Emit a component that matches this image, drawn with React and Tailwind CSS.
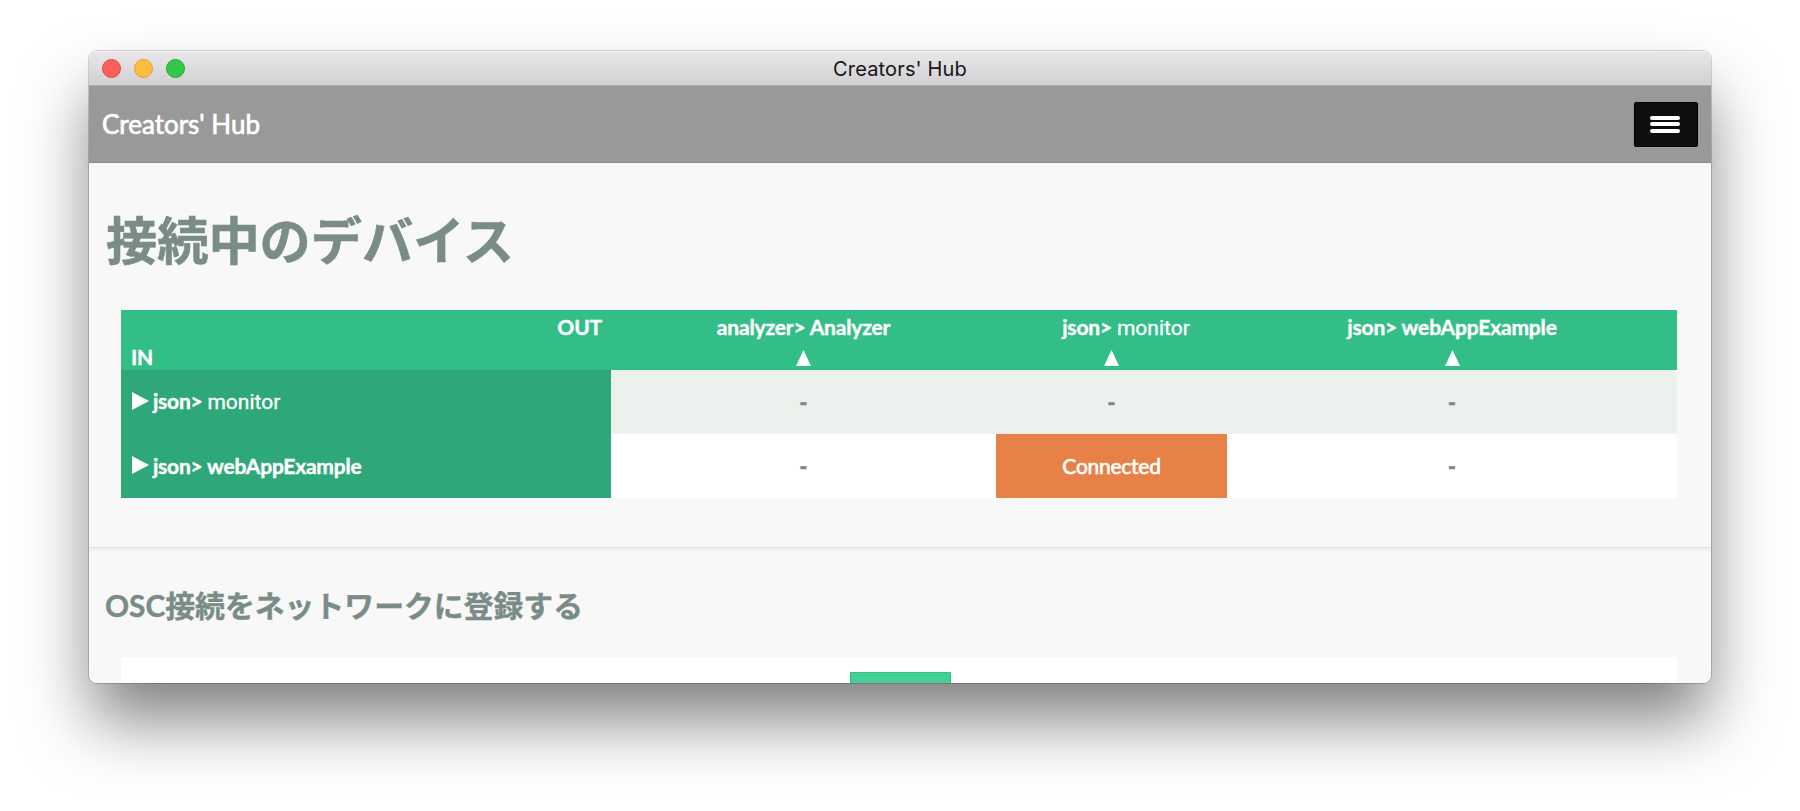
const th = 'h-[60px] p-0 pt-[2px] align-top font-bold leading-[30px] tracking-[-0.17px] [-webkit-text-stroke:0.4px_white]';
const cell = 'h-16 p-0 text-center font-black text-[#7a8c86] [-webkit-text-stroke:0.6px_#7a8c86]';
const side = 'h-16 bg-[#2fa879] p-0 pl-[11px] text-left font-bold tracking-[-0.22px] [-webkit-text-stroke:0.4px_white]';
const monitor = "font-['Roboto',sans-serif] font-normal text-[21px] tracking-[0px] [-webkit-text-stroke:0.3px_white]";

function Up() {
  return (
    <div className="flex h-[24px] items-end justify-center">
      <svg width="15" height="16" viewBox="0 0 16 16" preserveAspectRatio="none"><path d="M8 0L16 16H0Z" fill="#fff" /></svg>
    </div>
  );
}

function Play() {
  return (
    <svg width="17" height="18" viewBox="0 0 17 18" className="mr-[4px] -mt-[2px]"><path d="M0 0L17 9L0 18Z" fill="#fff" /></svg>
  );
}

export default function App() {
  return (
    <div className="h-[811px] w-[1800px] overflow-hidden bg-white pl-[89px] pt-[51px] font-['Lato','Noto_Sans_CJK_JP',sans-serif]">
      <div className="w-[1622px] rounded-[8px] shadow-[0_0_0_1px_rgba(0,0,0,0.17),0_40px_66px_-3px_rgba(0,0,0,0.5)]">
        <div className="flex h-[632px] flex-col overflow-hidden rounded-[8px] bg-[#f8f8f8] text-[21px] text-white">
          <header className="relative flex h-[35px] shrink-0 items-center border-b border-[#b0aeb0] border-t border-t-[#f6f5f6] bg-linear-to-b from-[#e9e6e9] to-[#d2d0d2] pl-[13px]">
            <div className="flex gap-[13px]">
              <i className="size-[19px] rounded-full border border-[#e24640] bg-[#fd605c]" />
              <i className="size-[19px] rounded-full border border-[#dfa033] bg-[#fdbd40]" />
              <i className="size-[19px] rounded-full border border-[#1fa92f] bg-[#34c84a]" />
            </div>
            <div className="absolute inset-x-0 pt-px text-center font-['Inter',sans-serif] text-[20px] tracking-[0.15px] text-[#151515]">Creators' Hub</div>
          </header>
          <nav className="flex h-[77px] shrink-0 items-center justify-between border-b border-[#8c8c8c] bg-[#999] pl-[13px] pr-[13px]">
            <span className="pt-px text-[26px] [-webkit-text-stroke:0.7px_white]">Creators' Hub</span>
            <button className="flex h-[45px] w-[64px] flex-col items-center justify-center gap-[2.5px] rounded-[2px] border border-black bg-[#0e0e0e] pr-[3px]">
              <i className="h-[4px] w-[30px] rounded-full bg-white" />
              <i className="h-[4px] w-[30px] rounded-full bg-white" />
              <i className="h-[4px] w-[30px] rounded-full bg-white" />
            </button>
          </nav>
          <section className="h-[385px] shrink-0 border-b border-[#e4e4e4] px-[32px] pt-[40px] shadow-[0_2px_4px_rgba(0,0,0,0.06)]">
            <h1 className="-ml-[15px] h-[107px] text-[51.2px] font-bold leading-[74px] text-[#7a8c86] [-webkit-text-stroke:0.6px_#7a8c86]">接続中のデバイス</h1>
            <table className="w-[1556px] table-fixed border-collapse bg-white">
              <colgroup>
                <col className="w-[490px]" />
                <col className="w-[385px]" />
                <col className="w-[231px]" />
                <col className="w-[450px]" />
              </colgroup>
              <thead>
                <tr className="bg-[#33be88]">
                  <th className={th}>
                    <div className="pr-[9px] text-right">OUT</div>
                    <div className="h-[28px] pl-[10px] text-left">IN</div>
                  </th>
                  <th className={th}>analyzer&gt; Analyzer<Up /></th>
                  <th className={th}><div className="h-[30px] pl-[29px]">json&gt; <span className={monitor}>monitor</span></div><Up /></th>
                  <th className={th}>json&gt; webAppExample<Up /></th>
                </tr>
              </thead>
              <tbody>
                <tr className="bg-[#ecf1ed]">
                  <th className={side}><span className="flex items-center"><Play /><span>json&gt; <span className={monitor}>monitor</span></span></span></th>
                  <td className={cell}>-</td>
                  <td className={cell}>-</td>
                  <td className={cell}>-</td>
                </tr>
                <tr>
                  <th className={side}><span className="flex items-center"><Play />json&gt; webAppExample</span></th>
                  <td className={cell}>-</td>
                  <td className="h-16 bg-[#e88148] p-0 text-center tracking-[-0.25px] [-webkit-text-stroke:0.6px_white]">Connected</td>
                  <td className={cell}>-</td>
                </tr>
              </tbody>
            </table>
          </section>
          <section className="flex-1 px-[32px] pt-[36px]">
            <h2 className="-ml-[16px] h-[73px] text-[29.85px] font-bold leading-[44px] text-[#7a8c86] [-webkit-text-stroke:0.4px_#7a8c86]">OSC接続をネットワークに登録する</h2>
            <div className="flex h-[60px] w-[1556px] justify-center bg-white pl-[3px] pt-[15px]">
              <div className="h-[45px] w-[101px] border border-[#2fc185] bg-[#43cf96]" />
            </div>
          </section>
        </div>
      </div>
    </div>
  );
}
